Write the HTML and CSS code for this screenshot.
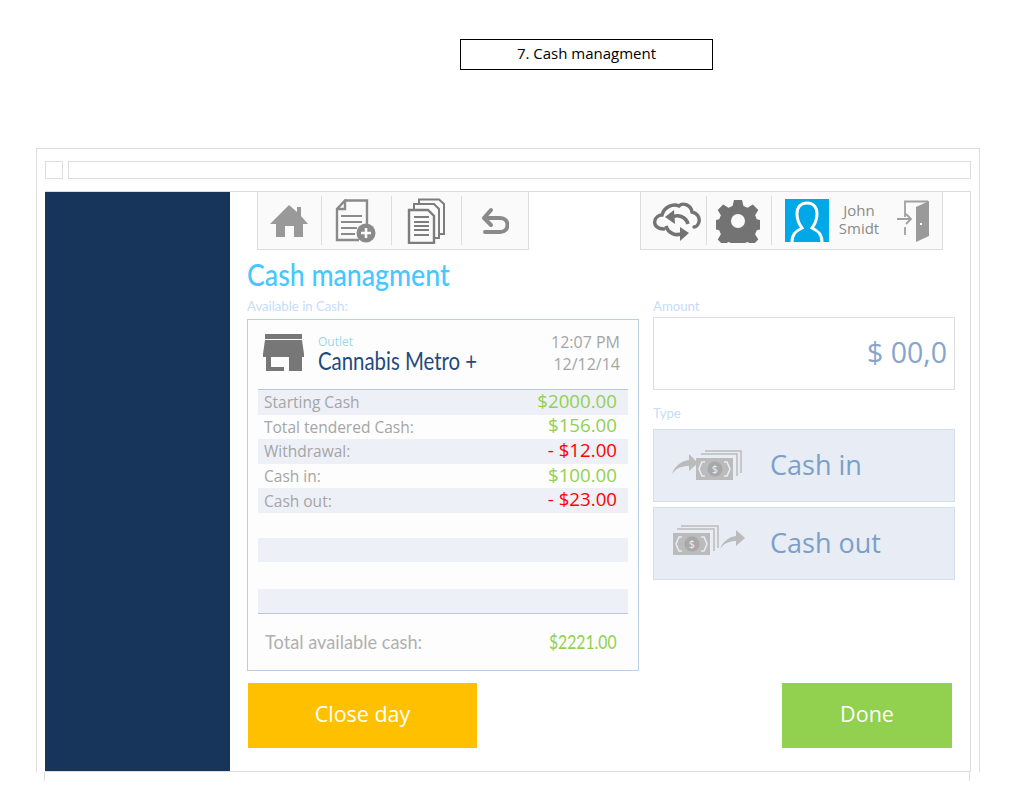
FILE: index.html
```html
<!DOCTYPE html>
<html lang="en">
<head>
    <meta charset="UTF-8">
    <meta name="viewport" content="width=device-width, initial-scale=1.0">
    <title>Cash managment</title>
    <link rel="stylesheet" href="styles.css">
</head>
<body>
    <header class="page-head">
        <div class="title-box">7. Cash managment</div>
    </header>
    <div class="frame">
        <div class="topbar">
            <div class="topbar-check"></div>
            <div class="topbar-input"></div>
        </div>
        <div class="app">
            <aside class="sidebar"></aside>
            <main class="content">
                <div class="toolbars">
                    <nav class="toolbar toolbar-left">
                        <div class="tool tool-home">
                            <svg width="38" height="34" viewBox="0 0 38 34"><path fill="#999" d="M19 1 27 8V3h4v9l7 8h-5v13h-9V22h-9v11H6V20H0z"/></svg>
                        </div>
                        <div class="tool tool-doc">
                            <svg width="42" height="44" viewBox="0 0 42 44"><path fill="none" stroke="#8a8a8a" stroke-width="2.400" d="M10 1.500H32V28M24 41H2V10L10 1.500V10H2"/><path fill="none" stroke="#8a8a8a" stroke-width="2.200" d="M6 17H27M6 23H27M6 29H22M6 35H20"/><circle cx="31" cy="34" r="9.500" fill="#8a8a8a"/><path fill="none" stroke="#fafafa" stroke-width="2.600" d="M26 34H36M31 29V39"/></svg>
                        </div>
                        <div class="tool tool-docs">
                            <svg width="38" height="46" viewBox="0 0 38 46"><path fill="none" stroke="#7d7d7d" stroke-width="2" d="M12 6V1.500H32L37 6V36H33M7 11V6H27L32 11V40H28"/><path fill="#fafafa" stroke="#7d7d7d" stroke-width="2.400" d="M2 12H21L27 18V45H2z"/><path fill="none" stroke="#7d7d7d" stroke-width="1.800" d="M7 19H22M7 24H22M7 28H22M7 32H22M7 37H22"/></svg>
                        </div>
                        <div class="tool tool-undo">
                            <svg width="28" height="28" viewBox="0 0 28 28"><path fill="none" stroke="#8a8a8a" stroke-width="4" stroke-linecap="round" d="M4 11H19C29 11 29 25 19 25H4"/><path fill="none" stroke="#8a8a8a" stroke-width="4" stroke-linecap="round" stroke-linejoin="round" d="M10 3 3 11 10 18"/></svg>
                        </div>
                    </nav>
                    <nav class="toolbar toolbar-right">
                        <div class="tool tool-cloud">
                            <svg width="48" height="42" viewBox="0 0 48 42"><path fill="none" stroke="#737373" stroke-width="3.400" stroke-linecap="round" d="M11 29C4 29 1 25 1.800 21 2.500 17 6 15 9 15 11 7 20 3 26 6 30 2 38 5 39 12 44 13 47 17 46 22 45 25 43 27 41 27"/><path fill="none" stroke="#737373" stroke-width="3.600" d="M35 24C33 17 25 13 17 18"/><path fill="#737373" d="M21 10 12 17 22 24z"/><path fill="none" stroke="#737373" stroke-width="3.600" d="M13 26C15 33 23 37 30 33"/><path fill="#737373" d="M27 27 36 33 27 41z"/></svg>
                        </div>
                        <div class="tool tool-gear">
                            <svg width="44" height="44" viewBox="0 0 44 44"><path fill="#737373" fill-rule="evenodd" d="M18 1h8l1.500 6 4 1.700 5.300-3.200 5.500 5.500-3.200 5.300 1.700 4 6 1.500v8l-6 1.500-1.700 4 3.200 5.300-5.500 5.500-5.300-3.200-4 1.700-1.500 6h-8l-1.500-6-4-1.700-5.300 3.200-5.500-5.500 3.200-5.300-1.700-4-6-1.500v-8l6-1.500 1.700-4-3.200-5.300 5.500-5.500 5.300 3.200 4-1.700zM22 15a7 7 0 1 0 0 14 7 7 0 1 0 0-14z"/></svg>
                        </div>
                        <div class="tool tool-user">
                            <div class="avatar">
                                <svg width="44" height="43" viewBox="0 0 44 43"><path fill="none" stroke="#fff" stroke-width="3" d="M7 43C7 35 11 32 17 29 14 25 12 20 12 15 12 8 16 4 22 4 28 4 32 8 32 15 32 20 30 25 27 29 33 32 37 35 37 43"/></svg>
                            </div>
                            <div class="user-name">John<br>Smidt</div>
                            <svg class="door" width="34" height="42" viewBox="0 0 34 42"><path fill="none" stroke="#a0a0a0" stroke-width="1.800" d="M8 17V1.500H31M8 27V35"/><path fill="#9a9a9a" d="M19 7 32 1V36L19 42z"/><rect x="23" y="23" width="2" height="2" fill="#fff"/><path fill="none" stroke="#a0a0a0" stroke-width="1.800" d="M0 19H13M9 14 14 19 9 24"/></svg>
                        </div>
                    </nav>
                </div>
                <h1 class="page-title"><span>Cash managment</span></h1>
                <div class="columns">
                    <section class="col-left">
                        <div class="field-label"><span>Available in Cash:</span></div>
                        <div class="card">
                            <div class="card-head">
                                <svg class="store" width="41" height="38" viewBox="0 0 41 38"><path fill="#777" d="M2 0H39V5H2zM2 6H39L41 20V23H0V20zM3 23H8V37H3zM8 33H21V37H8zM26 23H39V37H26z"/></svg>
                                <div class="outlet">
                                    <div class="outlet-label">Outlet</div>
                                    <div class="outlet-name"><span>Cannabis Metro +</span></div>
                                </div>
                                <div class="stamp">12:07 PM<br>12/12/14</div>
                            </div>
                            <div class="rows">
                                <div class="row tint"><span>Starting Cash</span><b class="plus">$2000.00</b></div>
                                <div class="row"><span>Total tendered Cash:</span><b class="plus">$156.00</b></div>
                                <div class="row tint"><span>Withdrawal:</span><b class="minus">- $12.00</b></div>
                                <div class="row"><span>Cash in:</span><b class="plus">$100.00</b></div>
                                <div class="row tint"><span>Cash out:</span><b class="minus">- $23.00</b></div>
                                <div class="row"></div>
                                <div class="row tint"></div>
                                <div class="row row-gap"></div>
                                <div class="row tint"></div>
                            </div>
                            <div class="card-total">
                                <span>Total available cash:</span>
                                <b>$2221.00</b>
                            </div>
                        </div>
                    </section>
                    <section class="col-right">
                        <div class="field-label"><span>Amount</span></div>
                        <div class="amount">$ 00,0</div>
                        <div class="field-label type-label"><span>Type</span></div>
                        <div class="type-btn">
                            <svg width="74" height="38" viewBox="0 0 74 38"><path fill="#bbb" d="M0 27C3 18 10 14 17 13V7L26 16 17 24V19C10 19 4 21 0 27z"/><path fill="none" stroke="#bbb" stroke-width="1.500" d="M33 4H69V26M29 7H65V29"/><rect x="24" y="11" width="37" height="22" fill="#bbb"/><path fill="none" stroke="#e8edf5" stroke-width="1.500" d="M33 15H30L27 22 30 29H33M52 15H55L58 22 55 29H52"/><circle cx="43" cy="22" r="7.500" fill="#a8a8a8"/><text class="bill-sign" x="43" y="26" text-anchor="middle">$</text></svg>
                            <span>Cash in</span>
                        </div>
                        <div class="type-btn">
                            <svg width="74" height="38" viewBox="0 0 74 38"><path fill="none" stroke="#bbb" stroke-width="1.500" d="M9 1H46V23M5 4H42V26"/><rect x="1" y="8" width="37" height="22" fill="#bbb"/><path fill="none" stroke="#e8edf5" stroke-width="1.500" d="M10 12H7L4 19 7 26H10M29 12H32L35 19 32 26H29"/><circle cx="20" cy="19" r="7.500" fill="#a8a8a8"/><text class="bill-sign" x="20" y="23" text-anchor="middle">$</text><path fill="#bbb" d="M48 24C51 16 57 12 64 11V5L73 13 64 21V16C58 16 52 18 48 24z"/></svg>
                            <span>Cash out</span>
                        </div>
                    </section>
                </div>
                <div class="actions">
                    <button class="btn btn-close">Close day</button>
                    <button class="btn btn-done">Done</button>
                </div>
            </main>
        </div>
    </div>
    <div class="frame-tail"></div>
</body>
</html>
```

FILE: styles.css
```css
body {
    font-family: "Open Sans", Arial, sans-serif;
    background-color: #fff;
    margin: 0;
    padding: 0;
}
.page-head {
    height: 148px;
    padding-top: 39px;
    padding-left: 460px;
    box-sizing: border-box;
}
.title-box {
    width: 253px;
    height: 31px;
    box-sizing: border-box;
    border: 1px solid #000;
    text-align: center;
    font-size: 15px;
    line-height: 27px;
    color: #000;
}
.frame {
    width: 944px;
    height: 624px;
    margin-left: 36px;
    box-sizing: border-box;
    border: 1px solid #ddd;
    border-bottom: none;
    padding: 12px 8px 0 8px;
}
.topbar {
    display: flex;
    gap: 5px;
    height: 18px;
    margin-bottom: 12px;
}
.topbar-check {
    width: 18px;
    box-sizing: border-box;
    border: 1px solid #ddd;
}
.topbar-input {
    flex: 1;
    border: 1px solid #ddd;
}
.frame-tail {
    width: 926px;
    height: 9px;
    margin-left: 44px;
    box-sizing: border-box;
    border-left: 1px solid #ddd;
    border-right: 1px solid #ddd;
}
.app {
    display: flex;
    height: 581px;
    width: 926px;
    box-sizing: border-box;
    border: 1px solid #ddd;
    border-left: none;
}
.sidebar {
    width: 185px;
    background-color: #17355b;
}
.content {
    flex: 1;
    padding-left: 17px;
    padding-right: 15px;
}
.toolbars {
    display: flex;
    justify-content: space-between;
    height: 58px;
    padding-left: 10px;
    padding-right: 12px;
}
.toolbar {
    display: flex;
    align-items: center;
    box-sizing: border-box;
    background-color: #fafafa;
    border: 1px solid #ddd;
    border-top: none;
    padding: 4px 0;
}
.toolbar-left { width: 272px; }
.toolbar-right { width: 303px; }
.tool {
    display: flex;
    align-items: center;
    justify-content: center;
    height: 100%;
    box-sizing: border-box;
    border-right: 1px solid #ddd;
}
.tool-home { width: 64px; padding-right: 2px; }
.tool-doc { width: 70px; padding-right: 2px; }
.tool-docs { width: 70px; padding-right: 2px; }
.tool-undo { flex: 1; border-right: none; }
.tool-cloud { width: 66px; padding-left: 6px; }
.tool-gear { width: 65px; padding-right: 2px; }
.tool-user {
    flex: 1;
    border-right: none;
    justify-content: flex-start;
    padding-left: 13px;
}
.avatar {
    width: 44px;
    height: 43px;
    background-color: #00a8e8;
    overflow: hidden;
}
.avatar svg { display: block; }
.user-name {
    width: 60px;
    text-align: center;
    font-size: 15px;
    line-height: 18px;
    margin-top: -3px;
    color: #8a8a8a;
}
.door { margin-left: 8px; }
.page-title {
    margin: 5px 0 0 0;
    font-family: Lato, sans-serif;
    font-weight: 500;
    font-size: 30px;
    line-height: 38px;
    height: 40px;
    color: #45c8ff;
}
.page-title span,
.field-label span,
.outlet-name span,
.card-total span {
    display: inline-block;
    transform-origin: left center;
}
.page-title span { transform: scaleX(.89); }
.columns {
    display: flex;
    gap: 14px;
    margin-top: 3px;
}
.col-left { width: 392px; }
.col-right { width: 302px; }
.field-label {
    font-family: Lato, sans-serif;
    font-size: 14px;
    line-height: 16px;
    height: 17px;
    margin-bottom: 4px;
    color: #c5dcfb;
}
.field-label span { transform: scaleX(.94); }
.card {
    height: 352px;
    box-sizing: border-box;
    border: 1px solid #b8cfe4;
    background-color: #fdfdfd;
    padding: 0 10px;
}
.card-head {
    display: flex;
    align-items: flex-start;
    height: 69px;
    padding: 14px 8px 0 5px;
    box-sizing: border-box;
}
.store { flex: none; }
.outlet {
    margin-left: 14px;
    margin-top: 1px;
    flex: 1;
}
.outlet-label {
    font-size: 12px;
    line-height: 14px;
    color: #9dd6e8;
}
.outlet-name {
    font-family: Lato, sans-serif;
    font-size: 25px;
    line-height: 22px;
    color: #1f4a80;
}
.outlet-name span { transform: scaleX(.815); }
.stamp {
    text-align: right;
    font-size: 16px;
    line-height: 22px;
    margin-top: -3px;
    color: #a5a5a5;
}
.rows {
    border-top: 1px solid #b8c8dc;
    border-bottom: 1px solid #b8c8dc;
}
.row {
    display: flex;
    justify-content: space-between;
    align-items: center;
    height: 24.6px;
    padding: 0 11px 0 6px;
    font-size: 15.5px;
    color: #a5a5a5;
}
.row-gap { height: 26.5px; }
.row b {
    font-weight: 400;
    font-size: 18.7px;
    margin-bottom: 4px;
}
.tint { background-color: #edf0f7; }
.plus { color: #92d050; }
.minus { color: #ff0000; }
.card-total {
    display: flex;
    justify-content: space-between;
    align-items: center;
    height: 58px;
    padding: 0 11px 4px 7px;
    box-sizing: border-box;
    font-family: Lato, sans-serif;
    font-size: 20px;
    color: #b0b0b0;
}
.card-total span { transform: scaleX(.91); }
.card-total b {
    display: inline-block;
    transform: scaleX(.83);
    transform-origin: right center;
    font-weight: 400;
    font-size: 19px;
    color: #92d050;
}
.amount {
    height: 73px;
    box-sizing: border-box;
    margin-top: -2px;
    border: 1px solid #ddd;
    text-align: right;
    padding-right: 7px;
    font-size: 28.5px;
    line-height: 68px;
    color: #85a5cc;
}
.type-label { margin-top: 15px; margin-bottom: 7px; }
.type-btn {
    display: flex;
    align-items: center;
    height: 73px;
    box-sizing: border-box;
    margin-bottom: 5px;
    padding-left: 18px;
    border: 1px solid #d5dfeb;
    background-color: #e8edf5;
    font-size: 27px;
    color: #7a9fc9;
}
.type-btn span {
    margin-left: 24px;
    margin-bottom: 3px;
}
.bill-sign {
    font-size: 11px;
    fill: #e8edf5;
}
.actions {
    display: flex;
    justify-content: space-between;
    margin-top: 12px;
    padding-right: 3px;
}
.btn {
    height: 65px;
    border: none;
    padding-bottom: 6px;
    font-family: "Open Sans", Arial, sans-serif;
    font-size: 21.5px;
    color: #fff;
}
.btn-close {
    width: 229px;
    margin-left: 1px;
    background-color: #ffc000;
}
.btn-done {
    width: 170px;
    background-color: #92d050;
}
```
